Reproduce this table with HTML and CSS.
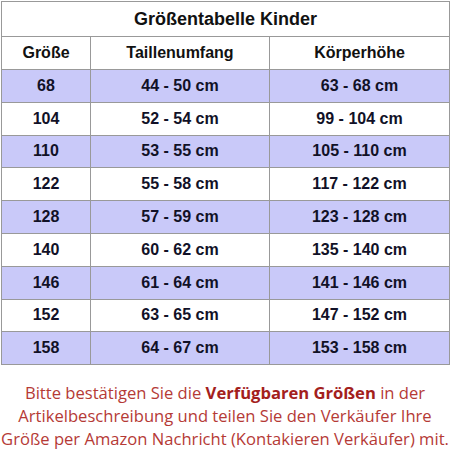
FILE: index.html
```html
<!DOCTYPE html>
<html lang="de">
<head>
  <meta charset="UTF-8" />
  <title>Größentabelle Kinder</title>
  <link rel="stylesheet" href="styles.css">
</head>
<body>
  <div class="page">
    <table class="sizes">
      <colgroup>
        <col class="c1">
        <col class="c2">
        <col class="c3">
      </colgroup>
      <tr class="title-row"><th colspan="3">Größentabelle Kinder</th></tr>
      <tr class="head-row">
        <th>Größe</th>
        <th>Taillenumfang</th>
        <th>Körperhöhe</th>
      </tr>
      <tr class="alt"><td>68</td><td>44 - 50 cm</td><td>63 - 68 cm</td></tr>
      <tr><td>104</td><td>52 - 54 cm</td><td>99 - 104 cm</td></tr>
      <tr class="alt"><td>110</td><td>53 - 55 cm</td><td>105 - 110 cm</td></tr>
      <tr><td>122</td><td>55 - 58 cm</td><td>117 - 122 cm</td></tr>
      <tr class="alt"><td>128</td><td>57 - 59 cm</td><td>123 - 128 cm</td></tr>
      <tr><td>140</td><td>60 - 62 cm</td><td>135 - 140 cm</td></tr>
      <tr class="alt"><td>146</td><td>61 - 64 cm</td><td>141 - 146 cm</td></tr>
      <tr><td>152</td><td>63 - 65 cm</td><td>147 - 152 cm</td></tr>
      <tr class="alt"><td>158</td><td>64 - 67 cm</td><td>153 - 158 cm</td></tr>
    </table>

    <p class="note">
      Bitte bestätigen Sie die <b>Verfügbaren Größen</b> in der
      Artikelbeschreibung und teilen Sie den Verkäufer Ihre
      Größe per Amazon Nachricht (Kontakieren Verkäufer) mit.
    </p>
  </div>
</body>
</html>
```

FILE: styles.css
```css
body {
  margin: 0;
  background: #fff;
  font-family: 'Liberation Sans', Arial, sans-serif;
}
.page {
  width: 450px;
  padding: 1px 1px 0;
  box-sizing: border-box;
}
.sizes {
  width: 448px;
  border-collapse: collapse;
  table-layout: fixed;
  color: #111127;
}
.c1 { width: 89px; }
.c2 { width: 179px; }
.c3 { width: 180px; }
.sizes th,
.sizes td {
  border: 1px solid #999;
  padding: 0;
  text-align: center;
  font-weight: bold;
  font-size: 16px;
}
.title-row th {
  height: 34px;
  font-size: 18px;
  color: #111;
}
.head-row th {
  height: 32px;
  color: #111;
}
.sizes td {
  height: 31.8px;
}
.alt td {
  background: #c9c9f9;
}
.note {
  margin: 16px 0 0;
  text-align: center;
  font-family: 'Open Sans', 'Noto Sans', sans-serif;
  font-size: 16.6px;
  line-height: 23px;
  color: #b53a36;
}
.note b {
  font-weight: bold;
  color: #a3201c;
}
```
